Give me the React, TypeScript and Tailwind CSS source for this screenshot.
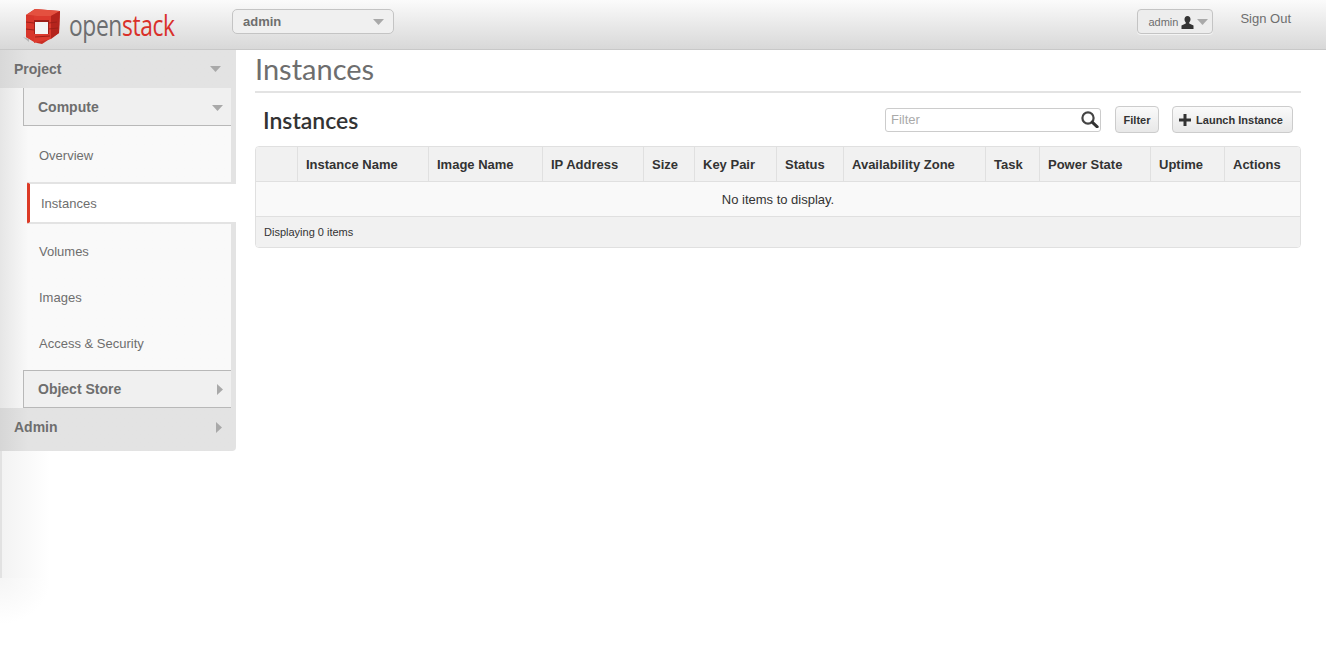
const SANS = 'font-["Liberation_Sans",Arial,sans-serif]'

const columns = [
  { label: '', width: 'w-[42px]' },
  { label: 'Instance Name', width: 'w-[131px]' },
  { label: 'Image Name', width: 'w-[114px]' },
  { label: 'IP Address', width: 'w-[101px]' },
  { label: 'Size', width: 'w-[51px]' },
  { label: 'Key Pair', width: 'w-[82px]' },
  { label: 'Status', width: 'w-[67px]' },
  { label: 'Availability Zone', width: 'w-[142px]' },
  { label: 'Task', width: 'w-[54px]' },
  { label: 'Power State', width: 'w-[111px]' },
  { label: 'Uptime', width: 'w-[74px]' },
  { label: 'Actions', width: 'flex-1' },
]

function CaretDown({ className = '' }: { className?: string }) {
  return (
    <svg width="11" height="6" viewBox="0 0 11 6" className={className}>
      <path d="M0 0h11L5.5 6z" fill="#a9a9a9" />
    </svg>
  )
}

function CaretRight({ className = '' }: { className?: string }) {
  return (
    <svg width="6" height="11" viewBox="0 0 6 11" className={className}>
      <path d="M0 0l6 5.5L0 11z" fill="#a9a9a9" />
    </svg>
  )
}

function Logo() {
  return (
    <svg width="38" height="38" viewBox="0 0 38 38">
      <path d="M0 29l6 5v-3z" fill="#b5b5b5" />
      <path d="M3 7L12 1l25 2-1 22-17 11-5-1-11-6z" fill="#c92e25" />
      <path d="M3 7L12 1l25 2-9 5-14 0z" fill="#e4503f" />
      <path d="M28 8l9-5-1 22-8 6z" fill="#b4241d" />
      <path d="M3 7l8 1v26L3 29z" fill="#d8362b" />
      <path d="M11 8h17v23l-17 4z" fill="#dc3a2e" />
      <path d="M11 12h15v14H11z" fill="#9e1f18" />
      <path d="M12 14h13v12H12z" fill="#f4f4f4" />
      <path d="M3 14l8 1M3 21l8 1M26 15l8-1M26 21l9-1M12 29l15-1" stroke="#9e1f18" strokeWidth="1" />
    </svg>
  )
}

function UserIcon() {
  return (
    <svg width="13" height="13" viewBox="0 0 13 13">
      <path d="M6.5 0C4.6 0 3.5 1.4 3.5 3.3c0 1.3.5 2.5 1.3 3.2v1.1L.5 9.6V13h12V9.6L8.2 7.6V6.5C9 5.8 9.5 4.6 9.5 3.3 9.5 1.4 8.4 0 6.5 0z" fill="#333" />
    </svg>
  )
}

function PlusIcon() {
  return (
    <svg width="12" height="12" viewBox="0 0 12 12">
      <path d="M4.5 0h3v4.5H12v3H7.5V12h-3V7.5H0v-3h4.5z" fill="#333" />
    </svg>
  )
}

function SearchIcon() {
  return (
    <svg width="18" height="17" viewBox="0 0 18 17" fill="none">
      <circle cx="7" cy="7" r="5.6" stroke="#444" strokeWidth="2.2" />
      <path d="M11.2 11.2L16.2 15.8" stroke="#333" strokeWidth="3" strokeLinecap="round" />
    </svg>
  )
}

function Header() {
  return (
    <header className="flex h-[50px] items-start border-b border-[#c8c8c8] bg-gradient-to-b from-[#fbfbfb] to-[#d8d8d8]">
      <div className="ml-[23px] mt-[8px] flex w-[209px] items-start">
        <Logo />
        <span className='ml-[8px] origin-left scale-x-[0.76] font-["Open_Sans",sans-serif] text-[30px] font-medium leading-[34px] tracking-[-0.5px] text-[#6d6e70]'>
          open<span className="text-[#d9302a]">stack</span>
        </span>
      </div>
      <div className="mt-[9px] flex h-[25px] w-[162px] items-center justify-between rounded-[5px] border border-[#c4c4c4] bg-[#f0f0f0] pl-[10px] pr-[9px]">
        <span className="pt-[1px] text-[13px] font-bold text-[#6e6e6e]">admin</span>
        <CaretDown />
      </div>
      <div className="ml-auto mt-[9px] flex h-[25px] w-[76px] items-center justify-between rounded-[4px] border border-[#c4c4c4] bg-[#ededed] pl-[10px] pr-[4px] pt-[1px] shadow-[0_1px_0_#f4f4f4]">
        <span className="text-[11px] text-[#6e6e6e]">admin</span>
        <UserIcon />
        <CaretDown />
      </div>
      <a className="ml-[27px] mr-[35px] mt-[11px] text-[13px] leading-[16px] text-[#6e6e6e]">Sign Out</a>
    </header>
  )
}

function NavLink({ label }: { label: string }) {
  return <div className="flex h-[46px] items-center pl-[39px] text-[13px] text-[#6e6e6e]">{label}</div>
}

function Sidebar() {
  return (
    <aside className="flex w-[236px] shrink-0 flex-col">
      <div className="flex h-[38px] items-center justify-between bg-gradient-to-r from-[#d8d8d8] via-[#e3e3e3] via-[12%] to-[#e3e3e3] pl-[14px] pr-[15px] text-[14px] font-bold text-[#6e6e6e]">
        Project
        <CaretDown />
      </div>
      <div className="flex bg-gradient-to-r from-[#e6e6e6] via-[#f9f9f9] via-[12%] to-[#f9f9f9]">
        <div className="flex h-[320px] flex-1 flex-col">
          <div className="ml-[23px] flex h-[38px] shrink-0 items-center justify-between border-b border-l border-[#b8b8b8] bg-[#f0f0f0] pl-[14px] pr-[8px] pt-[2px] text-[14px] font-bold text-[#6e6e6e]">
            Compute
            <CaretDown />
          </div>
          <div className="flex h-[56px] shrink-0 items-center pl-[39px] pt-[4px] text-[13px] text-[#6e6e6e]">Overview</div>
          <div className="relative z-10 -mr-[5px] ml-[27px] flex h-[42px] shrink-0 items-center rounded-l-[2px] border-y-2 border-l-[3px] border-y-[#e3e3e3] border-l-[#dc3a26] bg-white pl-[11px] pt-[1px] text-[13px] text-[#6e6e6e]">
            Instances
          </div>
          <div className="flex flex-1 flex-col pt-[5px]">
            <NavLink label="Volumes" />
            <NavLink label="Images" />
            <NavLink label="Access & Security" />
          </div>
          <div className="ml-[23px] flex h-[38px] shrink-0 items-center justify-between border-y border-l border-[#b8b8b8] bg-[#f0f0f0] pl-[14px] pr-[8px] text-[14px] font-bold text-[#6e6e6e]">
            Object Store
            <CaretRight />
          </div>
        </div>
        <div className="w-[5px] bg-[#e3e3e3]" />
      </div>
      <div className="flex h-[43px] items-center justify-between rounded-br-[4px] bg-gradient-to-r from-[#d6d6d6] via-[#e3e3e3] via-[12%] to-[#e3e3e3] pb-[5px] pl-[14px] pr-[14px] text-[14px] font-bold text-[#6e6e6e]">
        Admin
        <CaretRight />
      </div>
      <div className="h-[127px] w-[50px] border-l-2 border-[#e2e2e2] bg-gradient-to-r from-[#f3f3f3] to-white" />
      <div className="h-[45px] w-[50px] bg-[radial-gradient(ellipse_at_top_left,#f5f5f5,#ffffff_72%)]" />
    </aside>
  )
}

function InstancesTable() {
  return (
    <div className="overflow-hidden rounded-[4px] border border-[#e0e0e0] text-[13px] text-[#333]">
      <div className="flex h-[35px] border-b border-[#e0e0e0] bg-[#f1f1f1] font-bold">
        {columns.map((col, i) => (
          <div
            key={i}
            className={`flex items-center pl-[8px] pt-[1px] ${col.width} ${i < columns.length - 1 ? 'border-r border-[#e0e0e0]' : ''}`}
          >
            {col.label}
          </div>
        ))}
      </div>
      <div className="flex h-[35px] items-center justify-center border-b border-[#e0e0e0] bg-[#f9f9f9] pt-[1px]">
        No items to display.
      </div>
      <div className="flex h-[30px] items-center bg-[#f1f1f1] pl-[8px] text-[11px]">Displaying 0 items</div>
    </div>
  )
}

export default function App() {
  return (
    <div className={`flex min-h-[665px] flex-col bg-white ${SANS}`}>
      <Header />
      <div className="flex">
        <Sidebar />
        <main className="ml-[19px] mr-[25px] flex-1">
          <h1 className='border-b-2 border-[#e3e3e3] pb-[4px] font-["Lato",sans-serif] text-[29px] leading-[37px] text-[#6e6e6e]'>
            Instances
          </h1>
          <div className="flex h-[53px] items-center pl-[8px] pr-[8px]">
            <h2 className='font-["Lato",sans-serif] text-[23px] font-semibold leading-[30px] text-[#333]'>Instances</h2>
            <div className="ml-auto flex h-[24px] w-[216px] items-center justify-between rounded-[3px] border border-[#ccc] bg-white pl-[5px] pr-[1px]">
              <span className="text-[13px] text-[#aaa]">Filter</span>
              <SearchIcon />
            </div>
            <button className="ml-[14px] h-[27px] w-[44px] rounded-[4px] border border-[#ccc] bg-gradient-to-b from-[#fafafa] to-[#e8e8e8] pt-[1px] text-[11px] font-bold text-[#333]">
              Filter
            </button>
            <button className="ml-[13px] flex h-[27px] w-[121px] items-center justify-center gap-[5px] rounded-[4px] border border-[#ccc] bg-gradient-to-b from-[#fafafa] to-[#e8e8e8] pr-[3px] pt-[1px] text-[11px] font-bold text-[#333]">
              <PlusIcon />
              Launch Instance
            </button>
          </div>
          <InstancesTable />
        </main>
      </div>
    </div>
  )
}
